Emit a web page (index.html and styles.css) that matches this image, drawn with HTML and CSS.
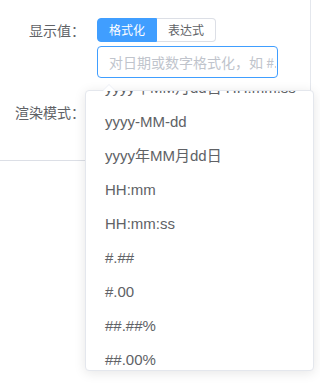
FILE: index.html
```html
<!DOCTYPE html>
<html lang="zh">
<head>
<meta charset="utf-8">
<link rel="stylesheet" href="styles.css">
</head>
<body>
<div class="panel">
  <div class="form-item first">
    <label class="label">显示值：</label>
    <div class="content">
      <div class="radio-group">
        <span class="radio active">格式化</span>
        <span class="radio">表达式</span>
      </div>
      <input class="input" type="text" placeholder="对日期或数字格式化，如 #.##">
    </div>
  </div>
  <div class="form-item">
    <label class="label">渲染模式：</label>
    <div class="content"></div>
  </div>
</div>
<div class="dropdown">
  <span class="arrow"></span>
  <div class="viewport">
    <ul class="list">
      <li>yyyy年MM月dd日 HH:mm:ss</li>
      <li>yyyy-MM-dd</li>
      <li>yyyy年MM月dd日</li>
      <li>HH:mm</li>
      <li>HH:mm:ss</li>
      <li>#.##</li>
      <li>#.00</li>
      <li>##.##%</li>
      <li>##.00%</li>
    </ul>
  </div>
</div>
</body>
</html>
```
FILE: styles.css
```css
html, body {
  margin: 0;
  padding: 0;
  background: #ffffff;
}
body {
  width: 320px;
  height: 390px;
  position: relative;
  overflow: hidden;
  font-family: "Liberation Sans", "Noto Sans CJK SC", sans-serif;
  color: #606266;
}
.panel {
  width: 311px;
  height: 161px;
  box-sizing: border-box;
  border-right: 1px solid #e4e7ed;
  border-bottom: 1px solid #dcdfe6;
  padding-top: 18px;
}
.form-item {
  display: flex;
  align-items: flex-start;
}
.form-item.first {
  margin-bottom: 18px;
}
.label {
  width: 85px;
  padding-right: 12px;
  text-align: right;
  font-family: "Noto Sans CJK SC", sans-serif;
  font-size: 14px;
  line-height: 24px;
  color: #606266;
  flex-shrink: 0;
}
.form-item:not(.first) .label {
  line-height: 32px;
}
.content {
  display: flex;
  flex-direction: column;
  align-items: flex-start;
  gap: 4px;
}
.radio-group {
  display: flex;
}
.radio {
  display: block;
  height: 24px;
  box-sizing: border-box;
  padding: 0 11px;
  border: 1px solid #dcdfe6;
  font-family: "Noto Sans CJK SC", sans-serif;
  font-size: 12px;
  line-height: 22px;
  color: #606266;
  background: #fff;
}
.radio + .radio {
  border-left: 0;
  border-radius: 0 4px 4px 0;
}
.radio.active {
  background: #409eff;
  border-color: #409eff;
  color: #fff;
  border-radius: 4px 0 0 4px;
}
.input {
  width: 181px;
  height: 32px;
  box-sizing: border-box;
  border: 1px solid #409eff;
  border-radius: 4px;
  padding: 0 1px 0 11px;
  margin: 0;
  outline: none;
  font-family: "Noto Sans CJK SC", sans-serif;
  font-size: 14px;
  color: #606266;
  background: #fff;
}
.input::placeholder {
  color: #c0c4cc;
}
.dropdown {
  position: absolute;
  left: 85px;
  top: 90px;
  width: 229px;
  height: 281px;
  box-sizing: border-box;
  border: 1px solid #e4e7ed;
  border-radius: 4px;
  background: #fff;
  box-shadow: 0 2px 12px rgba(0, 0, 0, 0.1);
}
.arrow {
  position: absolute;
  left: 17px;
  top: -7px;
  width: 0;
  height: 0;
  border-left: 6px solid transparent;
  border-right: 6px solid transparent;
  border-bottom: 6px solid #ebeef5;
}
.arrow::after {
  content: "";
  position: absolute;
  left: -6px;
  top: 1px;
  border-left: 6px solid transparent;
  border-right: 6px solid transparent;
  border-bottom: 6px solid #fff;
}
.viewport {
  height: 100%;
  overflow: hidden;
  border-radius: 4px;
}
.list {
  list-style: none;
  margin: -20px 0 0 0;
  padding: 0;
}
.list li {
  height: 34px;
  line-height: 34px;
  padding: 0 19px;
  font-size: 15px;
  color: #606266;
  white-space: nowrap;
}
```
